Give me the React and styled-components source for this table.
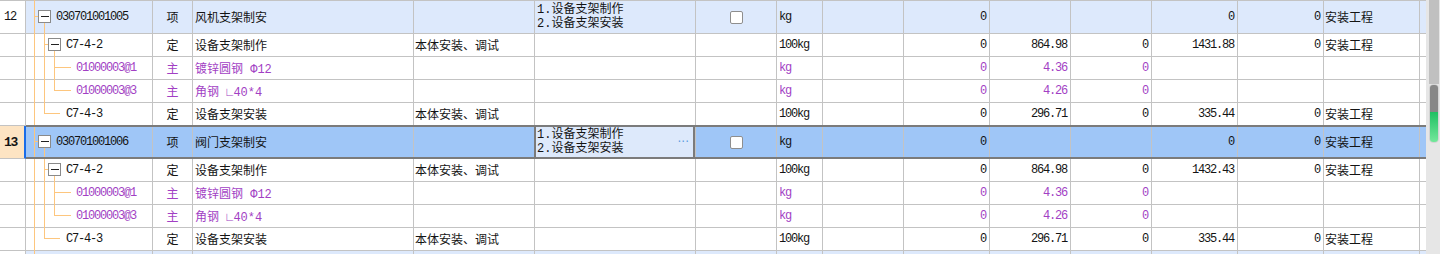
import React from 'react';
import styled, { createGlobalStyle, css } from 'styled-components';

const GRID = '#c3c3c3';
const ORANGE = '#fdc67e';
const PURPLE = '#a23fc4';
const FRAME = '#7b7b7b';

const GlobalStyle = createGlobalStyle`
  html, body { margin: 0; padding: 0; overflow: hidden; background: #fff; }
  body {
    font-family: "Liberation Mono", "Noto Sans CJK SC", monospace;
    font-size: 12px;
    color: #141414;
  }
`;

const Frame = styled.div`
  display: flex;
  width: 1440px;
  height: 254px;
  overflow: hidden;
`;

const Grid = styled.div`
  flex: none;
  width: 1426px;
  border-top: 1px solid ${GRID};
`;

const Row = styled.div`
  display: flex;
  height: ${(p) => p.$h}px;
  position: relative;
  background: ${(p) => p.$bg};
  ${(p) =>
    p.$selected &&
    css`
      &::after {
        content: '';
        position: absolute;
        left: 26px;
        right: 0;
        top: -1px;
        bottom: 0;
        border-top: 2px solid ${FRAME};
        border-bottom: 2px solid ${FRAME};
        pointer-events: none;
      }
    `}
`;

const Cell = styled.div`
  flex: none;
  box-sizing: border-box;
  width: ${(p) => p.$w}px;
  height: 100%;
  border-right: ${(p) => (p.$noRight ? 'none' : `1px solid ${GRID}`)};
  border-bottom: 1px solid ${GRID};
  display: flex;
  align-items: center;
  justify-content: ${(p) =>
    p.$align === 'right' ? 'flex-end' : p.$align === 'center' ? 'center' : 'flex-start'};
  padding: 0 ${(p) => p.$pr || 0}px 0 ${(p) => p.$pl || 0}px;
  white-space: nowrap;
  color: ${(p) => (p.$purple ? PURPLE : '#141414')};
  ${(p) =>
    p.$mono &&
    css`
      letter-spacing: -1.2px;
    `}
`;

const NumCell = styled(Cell)`
  padding-left: 4px;
  letter-spacing: -1.2px;
  ${(p) =>
    p.$selected
      ? css`
          background: #fde4c3;
          border-right: 2px solid #1a6ce8;
          font-weight: bold;
          font-size: 13px;
        `
      : css`
          background: #fff;
        `}
`;

const TreeCell = styled(Cell)`
  padding: 0;
`;

const CodeText = styled.span`
  letter-spacing: -1.2px;
`;

const FeatureCell = styled(Cell)`
  position: relative;
  justify-content: space-between;
  padding: 0 6px 0 2px;
  ${(p) =>
    p.$editing &&
    css`
      background: #dde9fb;
      &::after {
        content: '';
        position: absolute;
        left: -1px;
        right: 0;
        top: 0;
        bottom: 0;
        border-left: 2px solid ${FRAME};
        border-right: 2px solid ${FRAME};
        pointer-events: none;
      }
    `}
`;

const FeatureLines = styled.div`
  display: flex;
  flex-direction: column;
  line-height: 14px;
  font-size: 12px;
`;

const Ellipsis = styled.span`
  color: #5d9fe0;
  font-size: 12px;
  letter-spacing: 0;
  font-family: "DejaVu Sans", sans-serif;
`;

const Checkbox = styled.span`
  display: block;
  width: 13px;
  height: 13px;
  box-sizing: border-box;
  border: 1px solid #8e8e8e;
  border-radius: 2px;
  background: #fff;
`;

const ScrollBar = styled.div`
  flex: none;
  width: 14px;
  height: 254px;
  background: #e6e6e6;
  display: flex;
  justify-content: center;
  padding-left: 1px;
  box-sizing: border-box;
`;

const Track = styled.div`
  width: 10px;
  display: flex;
  flex-direction: column;
`;

const TrackFill = styled.div`
  height: 84px;
  background: #c0c0c0;
`;

const Thumb = styled.div`
  height: 59px;
  box-sizing: border-box;
  border: 1px solid #d4d4d4;
  border-radius: 4px;
  overflow: hidden;
  display: flex;
  flex-direction: column;
`;

const ThumbTop = styled.div`
  height: 27px;
  background: #878787;
`;

const ThumbGreen = styled.div`
  flex: 1;
  background: linear-gradient(#1fc062, #74e79b);
`;

function TreeLines({ kind, h }) {
  const stroke = { stroke: ORANGE, strokeWidth: 1 };
  const box = { fill: '#fff', stroke: '#8a8a8a', strokeWidth: 1 };
  const minus = { stroke: '#222', strokeWidth: 1 };
  const full = h + 1;
  if (kind === 'item') {
    return (
      <svg width="30" height={h} style={{ overflow: 'visible', flex: 'none' }} shapeRendering="crispEdges">
        <line x1="8.5" y1="-1" x2="8.5" y2={full} {...stroke} />
        <line x1="8" y1="15.5" x2="12" y2="15.5" {...stroke} />
        <line x1="18.5" y1="22" x2="18.5" y2={full} {...stroke} />
        <rect x="12.5" y="9.5" width="12" height="12" {...box} />
        <line x1="15" y1="15.5" x2="23" y2="15.5" {...minus} />
      </svg>
    );
  }
  if (kind === 'defBox') {
    return (
      <svg width="40" height={h} style={{ overflow: 'visible', flex: 'none' }} shapeRendering="crispEdges">
        <line x1="8.5" y1="0" x2="8.5" y2={full} {...stroke} />
        <line x1="18.5" y1="0" x2="18.5" y2={full} {...stroke} />
        <line x1="18" y1="10.5" x2="22" y2="10.5" {...stroke} />
        <line x1="28.5" y1="17" x2="28.5" y2={full} {...stroke} />
        <rect x="22.5" y="4.5" width="12" height="12" {...box} />
        <line x1="25" y1="10.5" x2="33" y2="10.5" {...minus} />
      </svg>
    );
  }
  if (kind === 'matFirst' || kind === 'matLast') {
    return (
      <svg width="50" height={h} style={{ overflow: 'visible', flex: 'none' }} shapeRendering="crispEdges">
        <line x1="8.5" y1="0" x2="8.5" y2={full} {...stroke} />
        <line x1="18.5" y1="0" x2="18.5" y2={full} {...stroke} />
        <line x1="28.5" y1="0" x2="28.5" y2={kind === 'matFirst' ? full : 11} {...stroke} />
        <line x1="28" y1="10.5" x2="45" y2="10.5" {...stroke} />
      </svg>
    );
  }
  return (
    <svg width="40" height={h} style={{ overflow: 'visible', flex: 'none' }} shapeRendering="crispEdges">
      <line x1="8.5" y1="0" x2="8.5" y2={full} {...stroke} />
      <line x1="18.5" y1="0" x2="18.5" y2="11" {...stroke} />
      <line x1="18" y1="10.5" x2="34" y2="10.5" {...stroke} />
    </svg>
  );
}

const VAL_W = [81, 86, 81, 81, 86, 86];

const children = (total) => [
  {
    tree: 'defBox', code: 'C7-4-2', kind: '定', name: '设备支架制作', work: '本体安装、调试',
    unit: '100kg', vals: ['', '0', '864.98', '0', total, '0'], proj: '安装工程',
  },
  {
    tree: 'matFirst', code: '01000003@1', kind: '主', name: '镀锌圆钢 Φ12', work: '', purple: true,
    unit: 'kg', vals: ['', '0', '4.36', '0', '', ''], proj: '',
  },
  {
    tree: 'matLast', code: '01000003@3', kind: '主', name: '角钢 ∟40*4', work: '', purple: true,
    unit: 'kg', vals: ['', '0', '4.26', '0', '', ''], proj: '',
  },
  {
    tree: 'defLast', code: 'C7-4-3', kind: '定', name: '设备支架安装', work: '本体安装、调试',
    unit: '100kg', vals: ['', '0', '296.71', '0', '335.44', '0'], proj: '安装工程',
  },
];

const rows = [
  {
    item: true, num: '12', tree: 'item', code: '030701001005', kind: '项', name: '风机支架制安',
    work: '', feature: ['1.设备支架制作', '2.设备支架安装'], unit: 'kg',
    vals: ['', '0', '', '', '0', '0'], proj: '安装工程',
  },
  ...children('1431.88'),
  {
    item: true, selected: true, num: '13', tree: 'item', code: '030701001006', kind: '项', name: '阀门支架制安',
    work: '', feature: ['1.设备支架制作', '2.设备支架安装'], unit: 'kg',
    vals: ['', '0', '', '', '0', '0'], proj: '安装工程',
  },
  ...children('1432.43'),
  {
    item: true, num: '', tree: 'item', code: '', kind: '', name: '', work: '', feature: null,
    unit: '', vals: ['', '', '', '', '', ''], proj: '', blank: true,
  },
];

function DataRow({ r }) {
  const h = r.item ? 33 : 23;
  const bg = r.selected ? '#9fc6f7' : r.item ? '#dde9fc' : '#fff';
  return (
    <Row $h={h} $bg={bg} $selected={r.selected}>
      <NumCell $w={26} $selected={r.selected}>{r.num}</NumCell>
      <TreeCell $w={127} $purple={r.purple}>
        <TreeLines kind={r.tree} h={h - 1} />
        <CodeText>{r.code}</CodeText>
      </TreeCell>
      <Cell $w={40} $align="center" $purple={r.purple}>{r.kind}</Cell>
      <Cell $w={221} $pl={2} $purple={r.purple}>{r.name}</Cell>
      <Cell $w={121} $pl={1}>{r.work}</Cell>
      <FeatureCell $w={161} $editing={r.selected}>
        {r.feature && (
          <FeatureLines>
            {r.feature.map((f) => (
              <span key={f}>{f}</span>
            ))}
          </FeatureLines>
        )}
        {r.selected && <Ellipsis>···</Ellipsis>}
      </FeatureCell>
      <Cell $w={81} $align="center">{r.item && !r.blank && <Checkbox />}</Cell>
      <Cell $w={46} $pl={2} $mono $purple={r.purple}>{r.unit}</Cell>
      {r.vals.map((v, i) => (
        <Cell key={i} $w={VAL_W[i]} $align="right" $pr={3} $mono $purple={r.purple}>
          {v}
        </Cell>
      ))}
      <Cell $w={96} $pl={1}>{r.proj}</Cell>
      <Cell $w={6} $noRight />
    </Row>
  );
}

export default function App() {
  return (
    <>
      <GlobalStyle />
      <Frame>
        <Grid>
          {rows.map((r, i) => (
            <DataRow key={i} r={r} />
          ))}
        </Grid>
        <ScrollBar>
          <Track>
            <TrackFill />
            <Thumb>
              <ThumbTop />
              <ThumbGreen />
            </Thumb>
          </Track>
        </ScrollBar>
      </Frame>
    </>
  );
}
